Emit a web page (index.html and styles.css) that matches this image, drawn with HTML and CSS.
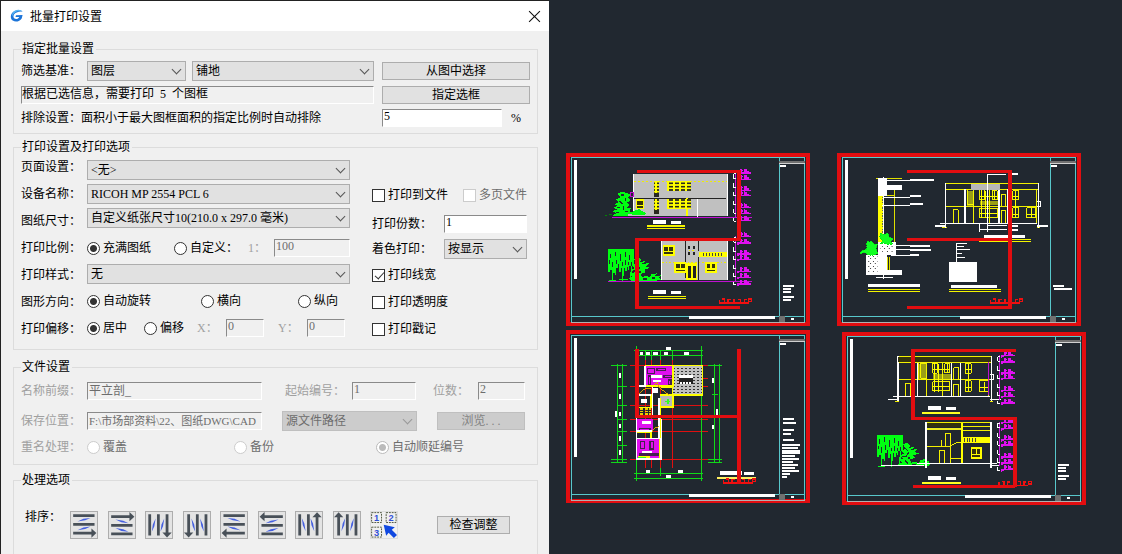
FILE: index.html
```html
<!DOCTYPE html>
<html lang="zh-CN">
<head>
<meta charset="utf-8">
<title>批量打印设置</title>
<link rel="stylesheet" href="styles.css">
</head>
<body>
<form class="dialog">
  <header class="titlebar">
    <svg class="logo" viewBox="0 0 14 14" aria-hidden="true">
      <path d="M12.6 2.4C9.8.4 5 .8 2.5 3.400C.2 5.800.3 9.800 2.800 11.600C5.400 13.400 9.800 12.600 11.700 9.400L12.600 6.100L6 6.300L5.500 8L9.300 7.900C8.600 9.700 6 10.600 4.400 9.500C2.700 8.200 3.300 5.600 5.100 4.200C7 2.700 10.200 2.400 12.600 2.400Z" fill="#1c74d8"/>
      <path d="M12.600 2.400C8 1.200 3.200 3.200 2.600 7.600C1 4.500 4.500.6 8.600.8C10.200.9 11.600 1.500 12.600 2.400Z" fill="#55b4f2"/>
    </svg>
    <h1>批量打印设置</h1>
    <button type="button" class="close" aria-label="关闭"><svg viewBox="0 0 12 12"><path d="M1 1L11 11M11 1L1 11"/></svg></button>
  </header>

  <main class="content">
    <fieldset class="group scope">
      <legend>指定批量设置</legend>
      <div class="line">
        <label class="name" for="basis">筛选基准：</label>
        <span class="pick basis"><select id="basis"><option>图层</option></select></span>
        <span class="pick grow"><select aria-label="图层名称"><option>铺地</option></select></span>
      </div>
      <button type="button" class="btn">从图中选择</button>
      <output class="well">根据已选信息，需要打印&nbsp; 5 &nbsp;个图框</output>
      <button type="button" class="btn">指定选框</button>
      <label for="ratio">排除设置：面积小于最大图框面积的指定比例时自动排除</label>
      <div class="line"><input class="field ratio" id="ratio" value="5"><span>%</span></div>
    </fieldset>

    <fieldset class="group printing">
      <legend>打印设置及打印选项</legend>
      <div class="names">
        <label for="page">页面设置：</label>
        <label for="device">设备名称：</label>
        <label for="paper">图纸尺寸：</label>
        <span>打印比例：</span>
        <label for="style">打印样式：</label>
        <span>图形方向：</span>
        <span>打印偏移：</span>
      </div>
      <div class="controls">
        <span class="pick"><select id="page"><option>&lt;无&gt;</option></select></span>
        <span class="pick"><select id="device"><option>RICOH MP 2554 PCL 6</option></select></span>
        <span class="pick"><select id="paper"><option>自定义纸张尺寸10(210.0 x 297.0 毫米)</option></select></span>
        <div class="line">
          <label class="opt w87"><input type="radio" name="scale" checked>充满图纸</label>
          <label class="opt w74"><input type="radio" name="scale">自定义：</label>
          <label class="dim w26" for="scale">1：</label><input class="field grow" id="scale" value="100" disabled>
        </div>
        <span class="pick"><select id="style"><option>无</option></select></span>
        <div class="line">
          <label class="opt w114"><input type="radio" name="dir" checked>自动旋转</label>
          <label class="opt w97"><input type="radio" name="dir">横向</label>
          <label class="opt"><input type="radio" name="dir">纵向</label>
        </div>
        <div class="line">
          <label class="opt w57"><input type="radio" name="offset" checked>居中</label>
          <label class="opt w53"><input type="radio" name="offset">偏移</label>
          <label class="dim w29" for="ox">X：</label><input class="field w38" id="ox" value="0" disabled>
          <label class="dim w29 second" for="oy">Y：</label><input class="field w38" id="oy" value="0" disabled>
        </div>
      </div>
      <div class="extras">
        <div class="line">
          <label class="opt grow"><input type="checkbox">打印到文件</label>
          <label class="opt off"><input type="checkbox" disabled>多页文件</label>
        </div>
        <div class="line"><label class="w72" for="copies">打印份数：</label><input class="field grow" id="copies" value="1"></div>
        <div class="line"><label class="w72" for="shade">着色打印：</label><span class="pick grow"><select id="shade"><option>按显示</option></select></span></div>
        <label class="opt"><input type="checkbox" checked>打印线宽</label>
        <label class="opt"><input type="checkbox">打印透明度</label>
        <label class="opt"><input type="checkbox">打印戳记</label>
      </div>
    </fieldset>

    <fieldset class="group files">
      <legend>文件设置</legend>
      <div class="line">
        <label class="name dim" for="prefix">名称前缀：</label><input class="field grow" id="prefix" value="平立剖_" disabled>
        <label class="dim start" for="start">起始编号：</label><input class="field w64" id="start" value="1" disabled>
        <label class="dim digits" for="digits">位数：</label><input class="field w47" id="digits" value="2" disabled>
      </div>
      <div class="line">
        <label class="name dim" for="path">保存位置：</label><input class="field grow path" id="path" value="F:\市场部资料\22、图纸DWG\CAD" disabled>
        <span class="pick source"><select aria-label="路径来源" disabled><option>源文件路径</option></select></span>
        <button type="button" class="btn browse" disabled>浏览. . .</button>
      </div>
      <div class="line">
        <span class="name dim">重名处理：</span>
        <label class="opt off w147"><input type="radio" name="dup" disabled>覆盖</label>
        <label class="opt off w142"><input type="radio" name="dup" disabled>备份</label>
        <label class="opt off"><input type="radio" name="dup" checked disabled>自动顺延编号</label>
      </div>
    </fieldset>

    <fieldset class="group process">
      <legend>处理选项</legend>
      <span class="order">排序：</span>
      <div class="sorts">
        <button type="button" aria-label="从左到右，自上而下"><svg viewBox="0 0 84 84"><g id="sort"><path d="M7 12H76M7 40H76M7 68H70" stroke="#485058" stroke-width="9" fill="none"/><path d="M66 53L82 68L66 83Z" fill="#485058"/><path d="M21 31L40 22L63 19L46 27ZM21 59L40 50L63 47L46 55Z" fill="#4560e0"/></g></svg></button>
        <button type="button" aria-label="从左到右，自下而上"><svg viewBox="0 0 84 84"><use href="#sort" transform="matrix(1 0 0 -1 0 83)"/></svg></button>
        <button type="button" aria-label="自上而下，从左到右"><svg viewBox="0 0 84 84"><use href="#sort" transform="matrix(0 1 1 0 0 0)"/></svg></button>
        <button type="button" aria-label="自上而下，从右到左"><svg viewBox="0 0 84 84"><use href="#sort" transform="matrix(0 1 -1 0 83 0)"/></svg></button>
        <button type="button" aria-label="从右到左，自上而下"><svg viewBox="0 0 84 84"><use href="#sort" transform="matrix(-1 0 0 1 84 0)"/></svg></button>
        <button type="button" aria-label="从右到左，自下而上"><svg viewBox="0 0 84 84"><use href="#sort" transform="matrix(-1 0 0 -1 84 83)"/></svg></button>
        <button type="button" aria-label="自下而上，从左到右"><svg viewBox="0 0 84 84"><use href="#sort" transform="matrix(0 -1 1 0 0 83)"/></svg></button>
        <button type="button" aria-label="自下而上，从右到左"><svg viewBox="0 0 84 84"><use href="#sort" transform="matrix(0 -1 -1 0 83 83)"/></svg></button>
        <button type="button" class="pickorder" aria-label="自选顺序"><svg viewBox="0 0 84 84">
          <g fill="none" stroke="#485038" stroke-width="3" stroke-dasharray="6 3"><path d="M2 2H34V34H2ZM49 2H81V34H49ZM2 49H34V81H2Z"/></g>
          <g fill="#3050d8" class="nums"><text x="18" y="29">1</text><text x="65" y="29">2</text><text x="18" y="76">3</text></g>
          <path d="M41 41L77 49L67 57L84 74L74 84L57 67L49 77Z" fill="#1048e0"/>
        </svg></button>
      </div>
      <button type="button" class="btn check">检查调整</button>
    </fieldset>
  </main>
</form>

<svg class="drawing" viewBox="549 0 573 554" preserveAspectRatio="xMinYMin meet" role="img" aria-label="图纸预览">
  <defs>
    <g id="frame" fill="none">
      <rect x="34" y="38" width="701" height="495" stroke="#58c8cc" stroke-width="3"/>
      <path d="M658 38V514M34 514H735" stroke="#58c8cc" stroke-width="3"/>
      <path d="M34 532H735" stroke="#b0b0b0" stroke-width="3"/>
      <path d="M658 50H735" stroke="#707070" stroke-width="6"/>
      <path d="M658 55H735" stroke="#d0d0d0" stroke-width="3"/>
      <path d="M657 514H675V531H657Z" fill="#707070"/>
      <path d="M42 44H51V402H42ZM660 60H678V66H660ZM387 514H645V522H387ZM693 519H702V525H693Z" fill="#fff"/>
    </g>
    <pattern id="panes" width="18" height="10" patternUnits="userSpaceOnUse"><path d="M0 0H18V10H0Z" fill="#ff0"/><path d="M4 3H14V8H4Z" fill="#282820"/></pattern>
    <pattern id="tiles" width="12" height="9" patternUnits="userSpaceOnUse"><path d="M0 0H12V9H0Z" fill="#c0c0c0"/><path d="M2 4H9V6H2Z" fill="#333"/></pattern>
    <pattern id="stone" width="14" height="15" patternUnits="userSpaceOnUse"><path d="M0 0H14V15H0Z" fill="#fff"/><path d="M2 2H6V5H2ZM9 8H12V13H9Z" fill="#333"/></pattern>
    <g id="win"><path d="M0 0H36V32H0Z" fill="#ff0"/><path d="M5 6H16V18H5ZM20 6H31V18H20ZM5 22H31V27H5Z" fill="#34340c"/></g>
    <path id="mark" d="M-8 4H32M0 -4H9M3 -9V4M12 -6H21M14 -9V4M18 -5V6M24 -2V4M-8 9L2 3" stroke="#e010f0" stroke-width="4" fill="none"/>
    <g id="marks"><path d="M528 83V216" stroke="#d010e0" stroke-width="3"/><use href="#mark" x="540" y="80"/><use href="#mark" x="540" y="99"/><use href="#mark" x="540" y="132"/><use href="#mark" x="540" y="148"/><use href="#mark" x="540" y="184"/><use href="#mark" x="540" y="202"/><use href="#mark" x="540" y="222"/>
      <path d="M528 87H521V101H528M521 115V129H528M521 141V153H528M521 168V180H528M521 192V205H528M521 219V229H528" stroke="#fff" stroke-width="3" fill="none"/></g>
    <g id="tree" fill="none" stroke="#0f1">
      <path d="M145 313H222V362H217V388H212V362H208V374H204V366H200V378H196V368H192V392H187V370H183V382H178V358H174V368H169V390H164V384H160V394H155V374H150V380H145Z" fill="#0f1" stroke="none"/>
      <path d="M159 384V408M189 380V408M213 380V404M147 407H168M176 405H204" stroke-width="3"/>
      <path d="M152 326V340M158 350V366M167 320V334M170 344V358M181 328V348M187 352V362M198 322V336M196 346V360M209 330V346M215 350V362M150 346V356M206 352V360" stroke="#212830" stroke-width="3"/>
      <path d="M222 342L234 336L243 344L240 352L256 347L249 358L269 353L258 364L270 369L252 374L258 382L243 387L246 397L258 392L270 398L274 388L290 385L284 395L302 391L296 399L308 403L290 407H212L207 400L219 396L210 388L222 384L213 374L225 370L216 360L230 355Z" fill="#0f1" stroke="none"/>
      <path d="M226 350L236 360M240 366L230 378M228 390L238 398M250 402H262M276 399H284M246 356H252M219 378H227M240 378V384" stroke="#212830" stroke-width="4"/>
    </g>
    <path id="bars" d="M669 420H702V426H669ZM669 429H693V435H669ZM669 438H693V444H669ZM669 453H702V459H669ZM669 462H693V468H669Z" fill="#fff"/>
    <path id="stamp" d="M478 474H566M478 465V474M486 462H493V473M504 474V464H512M522 473V463M534 463H542V473M553 473V464H560M566 462H575V470H566Z" stroke="#f01010" stroke-width="4" fill="none"/>
    <path id="caption" d="M279 225H318V237H279ZM333 228H363V237H333Z" fill="#fff"/>
    <g id="house" fill="none" stroke-width="3">
      <path d="M346 115H626M346 133H626M346 184H626M370 234V195H385V234M408 133V184M431 133V237M619 133V234M414 135H431V180H414ZM450 135H464V165H450ZM480 135V235M487 137H502V164H487ZM514 235V198H528V235M514 184V148H528V184M548 137H566V165H548ZM548 188H566V219H548ZM590 188H618V219H590ZM450 190H502V218H450ZM337 249H350M621 249H631" stroke="#f2f000"/>
      <path d="M410 137H431V183H410ZM450 167H506V181H450Z" fill="#ff0" fill-opacity=".55"/>
      <path d="M455 135V220M467 137V220M495 138V164M557 138V218M605 190V218M450 155H502M548 155H566M450 206H502M548 208H566M590 208H618" stroke="#ff0"/>
      <path d="M346 113V249M626 113V249M330 235H622M405 133V235M507 133V235M533 133V235M315 243H346M622 243H655M622 169H632V184H622" stroke="#fff" stroke-width="4"/>
    </g>
  </defs>

  <g class="sheets"><rect x="568" y="155" width="240" height="169"/><rect x="839" y="155" width="240" height="169"/><rect x="568" y="332" width="240" height="169"/><rect x="844" y="334" width="240" height="169"/></g>

  <g transform="translate(560 145) scale(.33333)">
    <use href="#frame"/><use href="#bars"/>
    <path d="M172 144L190 141L202 145L213 148L204 156L211 166L202 172L208 182L200 188L213 190L207 199L220 203L214 212H158L168 205L158 199L171 193L160 188L172 183L163 177L176 172L168 163L182 157Z" fill="#0f1"/>
    <path d="M184 150H192M178 168L188 176M196 160V168M172 188H180M190 184V194M168 202H178M196 200H204" stroke="#212830" stroke-width="4" fill="none"/>
    <path d="M134 211H141M148 208H156" stroke="#080" stroke-width="3"/>
    <path d="M220 87H504V214H204V208H220Z" fill="#c0c0c0"/>
    <path d="M220 87V208M502 87V214M412 158V215" stroke="#fff" stroke-width="4"/>
    <path d="M222 160H498" stroke="#222" stroke-width="3"/>
    <path d="M222 109H500" stroke="#ee0" stroke-width="3" stroke-dasharray="5 7"/>
    <path d="M382 160V214" stroke="#ff0" stroke-width="5"/>
    <rect x="282" y="108" width="16" height="36" fill="url(#panes)"/><rect x="282" y="163" width="16" height="32" fill="url(#panes)"/>
    <path d="M282 144H298V156H282ZM282 195H298V207H282Z" fill="#282820"/>
    <rect x="320" y="108" width="74" height="30" fill="url(#panes)"/><rect x="320" y="163" width="74" height="30" fill="url(#panes)"/>
    <use href="#win" transform="translate(227 162) scale(.72 .95)"/>
    <path d="M211 143H221V155H211ZM155 217H575" stroke="#c010d0" stroke-width="3" fill="none"/>
    <path d="M216 210L221 198L238 192L247 199L259 205L250 211Z" fill="#0f1"/>
    <use href="#marks"/><use href="#caption"/>
    <path d="M261 243H375M261 250H375M264 455H378M264 461H378" stroke="#f4f400" stroke-width="4"/>
    <use href="#tree"/>
    <path d="M304 289H504V406H304Z" fill="#c0c0c0"/>
    <path d="M304 289V406M502 289V406" stroke="#fff" stroke-width="4"/>
    <path d="M376 289V400M417 289V318M417 337V404" stroke="#222" stroke-width="3"/>
    <path d="M384 304H391V313H384ZM398 304H405V313H398ZM384 320H391V329H384ZM398 320H405V329H398Z" fill="#222"/>
    <path d="M386 316H405M306 352H500" stroke="#ee0" stroke-width="3" stroke-dasharray="5 6"/>
    <use href="#win" x="308" y="300"/><use href="#win" x="343" y="352"/><use href="#win" x="435" y="352"/>
    <path d="M417 320H500V336H417Z" fill="#ff0"/><path d="M430 330H490" stroke="#444" stroke-width="9" stroke-dasharray="3 6"/>
    <path d="M379 354H412V404H379Z" fill="#ff0"/><path d="M384 362H393V399H384ZM398 362H407V399H398Z" fill="#222"/>
    <path d="M144 409H575" stroke="#c010d0" stroke-width="3"/>
    <use href="#marks" y="191"/><use href="#caption" y="210"/><use href="#stamp"/>
  </g>

  <g transform="translate(830 145) scale(.33333)">
    <use href="#frame" x="3"/>
    <path d="M669 420H702V426H669ZM672 429H726V435H672Z" fill="#fff"/>
    <path d="M145 145H160V300H145Z" fill="#ff0"/>
    <path d="M158 155V300" stroke="#665" stroke-width="4" stroke-dasharray="4 4"/>
    <path d="M193 133V330M138 100H216M172 152H195M174 335V378M180 335V375M148 330V390" stroke="#e0e000" stroke-width="3"/>
    <path d="M145 98H172V120H216V134H172V152H145ZM143 290H197V330H172V375H216V389H108V330H143Z" fill="#fff"/>
    <path d="M114 330H143V380H114ZM150 298H190V320H150Z" fill="url(#stone)"/>
    <path d="M160 96V402M138 398H188M172 108H240M160 157H240M156 181H240M193 303H240M193 315H240M183 333H240" stroke="#fff" stroke-width="3"/>
    <path d="M240 102H312V108H240ZM240 150H273V156H240ZM240 174H279V180H240ZM240 300H300V306H240ZM240 312H303V318H240ZM240 327H267V333H240ZM114 417H270V426H114ZM363 420H501V429H363ZM357 351H441V411H357ZM462 270H585V279H462ZM547 84H565V90H547ZM547 240H564V246H547ZM547 252H564V258H547Z" fill="#fff"/>
    <path d="M114 434H270M114 440H270M357 434H513M357 440H513M447 283H603M447 289H603" stroke="#f4f400" stroke-width="4"/>
    <path d="M152 264L163 269L172 263L178 276L190 281L184 289L188 297L174 299L164 294L152 297L158 287L149 280ZM111 291L126 289L132 299L142 296L139 312L143 325L128 332L115 329L105 323L90 325L98 316L110 312Z" fill="#1f2" stroke="#0e1" stroke-width="3" stroke-dasharray="6 3"/>
    <path d="M379 295V351M379 295H411M379 304H401M379 315H420M379 327H395M379 338H406M472 88H528M450 235V262M450 253H530M475 243H530" stroke="#fff" stroke-width="3"/>
    <use href="#house"/>
    <path d="M423 116H511V134H423Z" fill="#b8b8b8"/>
    <path d="M473 90V260" stroke="#fff" stroke-width="4"/>
    <use href="#stamp" x="3"/>
  </g>

  <g transform="translate(560 325) scale(.33333)">
    <use href="#frame" y="-6"/>
    <path d="M669 279H702V285H669ZM669 291H708V297H669ZM669 312H702V318H669ZM669 324H693V330H669ZM669 342H702V348H669ZM666 357H720V363H666ZM666 366H714V372H666ZM666 375H720V387H666ZM666 390H705V396H666ZM666 399H717V405H666ZM666 408H699V414H666ZM666 417H714V423H666ZM666 426H705V432H666ZM666 435H717V441H666ZM666 444H690V450H666ZM666 453H681V459H666Z" fill="#fff"/>
    <path d="M210 121H445M210 184H445M210 243H445M210 283H445M210 319H445M210 404H445M256 75V430M274 75V430M301 75V430M337 75V430M424 75V430M400 160H445" stroke="#e01010" stroke-width="3"/>
    <path d="M230 62V468M424 62V468M337 75V105M301 75V105M274 75V105M256 75V105M222 76H428M232 91H428M172 118V415M187 118V415M152 121H200M175 184H200M175 243H200M175 283H200M175 319H200M175 361H200M152 404H200M152 412H200M463 118V415M478 118V415M445 121H486M455 209H475M445 404H486M445 412H486M222 445H428M222 460H428M301 430V453" stroke="#10d818" stroke-width="3"/>
    <path d="M318 66H333V75H318ZM240 81H249V90H240ZM259 81H269V90H259ZM279 81H294V90H279ZM312 81H324V90H312ZM372 81H387V90H372ZM258 435H270V444H258ZM354 435H369V444H354ZM318 450H333V459H318ZM177 145H183V160H177ZM177 207H183V222H177ZM177 260H183V274H177ZM177 296H183V310H177ZM177 334H183V349H177ZM177 374H183V389H177ZM164 259H170V277H164ZM457 160H462V174H457ZM469 252H475V269H469ZM457 299H462V313H457Z" fill="#fff"/>
    <path d="M256 124H340V184H256ZM230 283H278V319H230ZM230 341H303V402H230Z" fill="#e010f0"/>
    <path d="M263 130H284V145H263ZM291 130H316V137H291ZM265 153H272V178H265ZM312 151H334V157H312ZM326 165H333V180H326ZM242 349H254V370H242ZM270 349H281V372H270ZM240 386H297V390H240ZM239 310H270V319H239Z" fill="none" stroke="#442050" stroke-width="4"/>
    <path d="M340 122H428V211H340Z" fill="url(#tiles)"/><path d="M301 211H340V247H301Z" fill="#b8b8b8"/>
    <path d="M254 122H428V211H340M256 122V184H340V122M301 211H340V247H301V402M233 248H274V207M232 321H274V338M303 187H338V207M233 396H267V402" fill="none" stroke="#ff0" stroke-width="5"/>
    <path d="M232 184H255V122M230 184V402H304V283M237 210H274M278 186V277M298 220V338M230 341H303M230 318H278" fill="none" stroke="#fff" stroke-width="5"/>
    <path d="M239 207C245 194 259 189 274 190M283 179L293 173L296 187L327 210M278 320C280 309 288 305 298 306" fill="none" stroke="#e0a000" stroke-width="3"/>
    <path d="M240 252H274M240 260H274M240 268H274" stroke="#ec0" stroke-width="5" stroke-dasharray="10 4"/>
    <path d="M302 220V338" stroke="#ff0" stroke-width="5"/>
    <path d="M273 150H306V159H273ZM279 165H303V171H279ZM275 188H295V205H275ZM243 222H260V235H243ZM246 289H273V298H246ZM245 379H276V385H245ZM358 150H400V158H358ZM480 438H546V450H480ZM552 441H582V450H552Z" fill="#fff"/>
    <path d="M358 158H400V177H358Z" fill="#222"/><path d="M361 174H392" stroke="#fff" stroke-width="5" stroke-dasharray="6 3"/>
    <path d="M314 229H330M324 222V236M234 398H259" stroke="#3f2" stroke-width="4"/>
    <path d="M471 459H588" stroke="#fff060" stroke-width="6"/>
    <use href="#stamp" x="12"/>
  </g>

  <g transform="translate(834 325) scale(.33333)">
    <use href="#frame" x="6" y="-3"/><use href="#bars" x="4" y="-3"/>
    <use href="#house" x="-154" y="-20"/>
    <path d="M193 97H470V110H193ZM277 293H380V307H277Z" fill="#34340f"/>
    <path d="M464 112V210" stroke="#c010d0" stroke-width="3"/>
    <use href="#marks" x="-30" y="8"/>
    <use href="#tree" x="-15" y="17"/>
    <path d="M277 293H472M277 364H350M351 415V362L365 354H384M334 362V325H350V362M317 415V376H332V415M351 401H382M323 346V367M388 305H472M388 318H472" fill="none" stroke="#f4f000" stroke-width="3"/>
    <path d="M277 313H380" stroke="#ee2" stroke-width="7"/>
    <path d="M385 293V415M277 430V418M472 430V418" stroke="#ff0" stroke-width="5"/>
    <path d="M385 335H470V355H385Z" fill="#ff0"/><path d="M390 345H425" stroke="#444" stroke-width="11" stroke-dasharray="3 5"/>
    <path d="M390 296H470" stroke="#222" stroke-width="3" stroke-dasharray="10 6"/>
    <use href="#win" transform="translate(411 366) scale(.9 1.100)"/>
    <path d="M277 291V430M471 291V430" stroke="#fff" stroke-width="5"/><path d="M140 422H270M250 415H490M472 422H495" stroke="#fff" stroke-width="3"/>
    <use href="#marks" x="-30" y="208"/>
    <use href="#caption" x="3" y="18"/><use href="#caption" x="3" y="228"/>
    <path d="M264 264H378M264 474H381" stroke="#ffff20" stroke-width="6"/>
    <use href="#stamp" x="17" y="7"/>
  </g>

  <g class="route">
    <path d="M637 171H739M739 239.500H637M637 307.500H740"/>
    <path d="M907 171H1012M907 239.500H1010M907 307.500H1012"/>
    <path d="M637 416H739"/>
    <path d="M1016 350.500H913M913 418.500H1017M1015 486.500H913"/>
    <path class="down" d="M739 170V241M637 238V309M1010 170V309M637 349V418M739 349V484M913 349V420M1015 417V487"/>
  </g>
</svg>
</body>
</html>
```
FILE: styles.css
```css
* { box-sizing: border-box; }

body {
  margin: 0;
  display: flex;
  height: 100vh;
  overflow: hidden;
  background: #212830;
  color: #000;
  font: 12px/16px "Liberation Serif", "Noto Sans CJK SC", sans-serif;
}

.dialog {
  flex: 549 1 0;
  min-width: 0;
  display: flex;
  flex-direction: column;
  border: solid #222;
  border-width: 1px 0 0;
  background: #f0f0f0;
  box-shadow: inset 1px 0 #222;
  white-space: nowrap;
}

.drawing {
  flex: 573 1 0;
  min-width: 0;
  height: 100%;
  shape-rendering: crispEdges;
}

.sheets { fill: none; stroke: #e20d10; stroke-width: 4; }
.route { fill: none; stroke: #e20d10; stroke-width: 3; }
.route .down { stroke-width: 4; }

/* Title bar */
.titlebar {
  display: flex;
  align-items: center;
  height: 30px;
  margin-left: 1px;
  padding: 0 8px 0 9px;
  background: #fff;
}
.logo { width: 14px; height: 14px; }
h1 {
  flex: 1;
  margin: 0 0 0 6px;
  font: 12px/16px "Noto Sans CJK SC", sans-serif;
}
.close { padding: 0; border: 0; background: none; line-height: 0; }
.close svg { width: 13px; height: 13px; fill: none; stroke: #111; }

/* Groups */
.content {
  flex: 1;
  display: flex;
  flex-direction: column;
  padding: 10px 11px 0 13px;
}
.group {
  min-width: 0;
  margin: 0;
  border: 1px solid #dcdcdc;
}
legend { padding: 0 2px 0 1px; }
.scope {
  display: grid;
  grid-template-columns: 1fr 148px;
  grid-template-rows: 20px 18px 18px;
  gap: 5px 8px;
  align-items: center;
  padding: 4px 7px 6px;
}
.printing {
  display: grid;
  grid-template-columns: 66px 263px 1fr;
  margin-top: 5px;
  padding: 0 7px 10px;
}
.files {
  display: grid;
  grid-template-rows: 30px 26px 20px;
  align-items: start;
  margin-top: 9px;
  padding: 6px 12px 7px 7px;
}
.process {
  flex: 1;
  display: flex;
  align-items: flex-start;
  margin-top: 7px;
  padding: 23px 27px 0 7px;
  border-bottom: 0;
}

.line { display: flex; align-items: center; min-width: 0; }
.files .line { height: 20px; }
.name { flex: 0 0 66px; }
.grow { flex: 1; }
.basis { width: 99px; margin-right: 6px; }
.ratio { width: 120px; margin-right: 9px; }

.names { display: flex; flex-direction: column; gap: 7px; padding-top: 2px; }
.names > * { line-height: 20px; }
.controls {
  display: grid;
  grid-template-rows: 24px 24px 30px 26px 27px 27px 20px;
  padding-top: 5px;
}
.controls > * { height: 20px; }
.extras {
  display: grid;
  grid-template-rows: 29px 25px 26px 27px 27px 20px;
  align-self: end;
  padding: 0 3px 0 22px;
}
.extras > * { height: 20px; }

/* Controls */
.pick { position: relative; display: block; min-width: 0; height: 20px; }
.pick::after {
  content: "";
  position: absolute;
  top: 5px;
  right: 6px;
  width: 6px;
  height: 6px;
  border: solid #555;
  border-width: 0 1px 1px 0;
  transform: rotate(45deg);
  pointer-events: none;
}
select {
  appearance: none;
  display: block;
  width: 100%;
  height: 100%;
  padding: 0 18px 0 3px;
  border: 1px solid #adadad;
  border-radius: 0;
  background: #e1e1e1;
  color: #000;
  font: inherit;
}
select:disabled { border-color: #bfbfbf; background: #ccc; color: #6d6d6d; opacity: 1; }
.source { width: 135px; margin: 0 20px; }
.source::after { border-color: #999; }

.btn {
  height: 18px;
  padding: 0;
  border: 1px solid #adadad;
  background: #e1e1e1;
  color: #000;
  font: inherit;
  line-height: 14px;
}
.btn:disabled { border-color: #bfbfbf; background: #ccc; color: #838383; }
.browse { width: 88px; }

.field, .well {
  min-width: 0;
  height: 18px;
  border: 1px solid;
  border-color: #8a8a8a #fff #fff #8a8a8a;
  background: #fff;
  line-height: 14px;
}
.field { padding: 0 1px 3px; font: inherit; color: #000; }
.field:disabled { background: #f0f0f0; color: #6d6d6d; }
.path { font-size: 11px; }
.well { background: #f0f0f0; overflow: hidden; }

.opt { display: flex; align-items: center; gap: 3px; }
.opt.off { color: #6d6d6d; }
.dim { color: #a0a0a0; }
.opt input {
  appearance: none;
  flex: none;
  width: 13px;
  height: 13px;
  margin: 0;
  border: 1px solid #333;
  background: #fff;
}
.opt input[type="radio"] { border-radius: 50%; }
.opt input[type="radio"]:checked { background: radial-gradient(circle, #333 3px, #fff 4px); }
.opt input:disabled { border-color: #ccc; }
.opt input[type="radio"]:checked:disabled { border-color: #bbb; background: radial-gradient(circle, #bbb 3px, #fff 4px); }
.opt input[type="checkbox"]:checked::after {
  content: "";
  display: block;
  width: 4px;
  height: 8px;
  margin: 0 0 0 4px;
  border: solid #333;
  border-width: 0 1px 1px 0;
  transform: rotate(42deg);
}

.w26 { flex: 0 0 26px; }
.w29 { flex: 0 0 29px; }
.w38 { width: 38px; }
.w47 { width: 47px; }
.w53 { flex: 0 0 53px; }
.w57 { flex: 0 0 57px; }
.w64 { width: 64px; }
.w72 { flex: 0 0 72px; }
.w74 { flex: 0 0 74px; }
.w87 { flex: 0 0 87px; }
.w97 { flex: 0 0 97px; }
.w114 { flex: 0 0 114px; }
.w142 { flex: 0 0 142px; }
.w147 { flex: 0 0 147px; }
.second { margin-left: 14px; }
.start { width: 67px; margin-left: 23px; }
.digits { width: 45px; margin-left: 17px; }

/* Sort order buttons */
.order { flex: 1 0 49px; padding-left: 4px; line-height: 12px; }
.sorts { display: flex; justify-content: space-between; flex: 0 0 328px; }
.sorts button {
  width: 28px;
  height: 28px;
  padding: 0;
  border: 1px solid #adadad;
  background: #e4e4e4;
  line-height: 0;
}
.sorts svg { width: 100%; height: 100%; }
.sorts .pickorder { border-color: #ddd; background: #f0f0f0; }
.nums { font: bold 30px "Liberation Sans", sans-serif; text-anchor: middle; }
.check { flex: 0 0 73px; margin: 5px 0 0 39px; }
```
